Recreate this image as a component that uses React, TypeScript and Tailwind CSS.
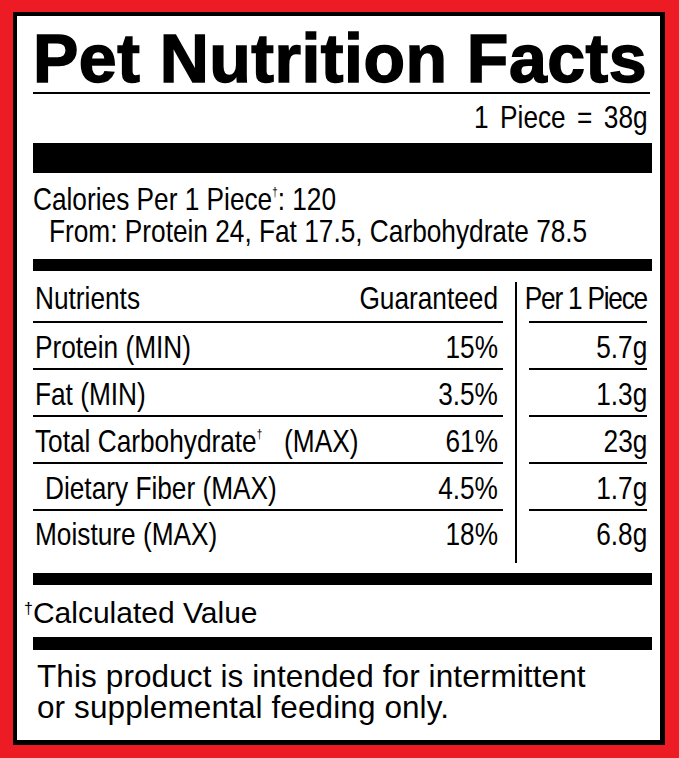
const narrow = "font-['Liberation_Sans',Arial,sans-serif] text-[32px]";

// no condensed face is installed, so narrow text is squeezed horizontally
function N({ children, right, className = "" }: { children: React.ReactNode; right?: boolean; className?: string }) {
  return (
    <span
      className={`inline-block whitespace-nowrap scale-x-[0.82] ${right ? "origin-right" : "origin-left"} ${className}`}
    >
      {children}
    </span>
  );
}

type Row = {
  name: React.ReactNode;
  guaranteed: string;
  perPiece: string;
  indent?: boolean;
};

const rows: Row[] = [
  { name: "Protein (MIN)", guaranteed: "15%", perPiece: "5.7g" },
  { name: "Fat (MIN)", guaranteed: "3.5%", perPiece: "1.3g" },
  {
    name: (
      <>
        Total Carbohydrate
        <sup className="relative top-[-14px] text-[12px]">†</sup>
        {"\u00a0\u00a0 (MAX)"}
      </>
    ),
    guaranteed: "61%",
    perPiece: "23g",
  },
  { name: "Dietary Fiber (MAX)", guaranteed: "4.5%", perPiece: "1.7g", indent: true },
  { name: "Moisture (MAX)", guaranteed: "18%", perPiece: "6.8g" },
];

export default function App() {
  return (
    <div className="h-[758px] w-[679px] bg-[#ed1c24] pb-[13px] pl-[13px] pr-[14px] pt-[12px]">
      <div className="h-full border-[4px] border-b-[5px] border-r-[5px] border-black bg-white pl-[16px] pr-[8px] pt-[8px] text-black">
        {/* title */}
        <h1 className="mr-[2px] whitespace-nowrap border-b-2 border-black font-['Liberation_Sans',Arial,sans-serif] text-[68px] font-bold leading-[68px] tracking-[0.5px] [-webkit-text-stroke:1.5px_black]">
          Pet Nutrition Facts
        </h1>
        <div className={`${narrow} mt-[5px] pr-[4px] text-right leading-[36px]`}>
          <N right className="[word-spacing:5px]">
            1 Piece = 38g
          </N>
        </div>
        <div className="mt-[8px] h-[30px] bg-black" />

        {/* calories */}
        <div className={`${narrow} mt-[10px] leading-[32px]`}>
          <div>
            <N>
              Calories Per 1 Piece
              <sup className="relative top-[-14px] text-[12px]">†</sup>: 120
            </N>
          </div>
          <div className="pl-[16px]">
            <N>From: Protein 24, Fat 17.5, Carbohydrate 78.5</N>
          </div>
        </div>
        <div className="mt-[12px] h-[12px] bg-black" />

        {/* table */}
        <div className={`${narrow} flex`}>
          <div className="w-[470px]">
            <div className="flex h-[52px] justify-between border-b-2 border-black pl-[2px] pr-[5px] pt-[7px] leading-[40px]">
              <N>Nutrients</N>
              <N right>Guaranteed</N>
            </div>
            {rows.map((r, i) => {
              const last = i === rows.length - 1;
              return (
                <div
                  key={i}
                  className={`flex justify-between pr-[5px] leading-[40px] ${
                    last ? "h-[52px] pt-[3px]" : "h-[47px] border-b-2 border-black pt-[4px]"
                  } ${r.indent ? "pl-[12px]" : "pl-[2px]"}`}
                >
                  <N>{r.name}</N>
                  <N right>{r.guaranteed}</N>
                </div>
              );
            })}
          </div>
          <div className="flex w-[26px] justify-center pt-[11px]">
            <div className="w-[2px] bg-black" />
          </div>
          <div className="w-[118px]">
            <div className="flex h-[52px] justify-end border-b-2 border-black pt-[7px] leading-[40px]">
              <N right className="tracking-[-1.5px]">
                Per 1 Piece
              </N>
            </div>
            {rows.map((r, i) => {
              const last = i === rows.length - 1;
              return (
                <div
                  key={i}
                  className={`flex justify-end leading-[40px] ${
                    last ? "h-[52px] pt-[3px]" : "h-[47px] border-b-2 border-black pt-[4px]"
                  }`}
                >
                  <N right>{r.perPiece}</N>
                </div>
              );
            })}
          </div>
        </div>
        <div className="mt-[10px] h-[12px] bg-black" />

        {/* footnote */}
        <div className="mt-[12px] pl-[3px] font-['Liberation_Sans',Arial,sans-serif] text-[30px] leading-[32px]">
          <sup className="relative top-[-9px] ml-[-12px] text-[16px]">†</sup>Calculated Value
        </div>
        <div className="mt-[8px] h-[13px] bg-black" />
        <p className="mt-[11px] pl-[4px] font-['Liberation_Sans',Arial,sans-serif] text-[31.5px] leading-[31px] tracking-[0.1px]">
          This product is intended for intermittent
          <br />
          or supplemental feeding only.
        </p>
      </div>
    </div>
  );
}
